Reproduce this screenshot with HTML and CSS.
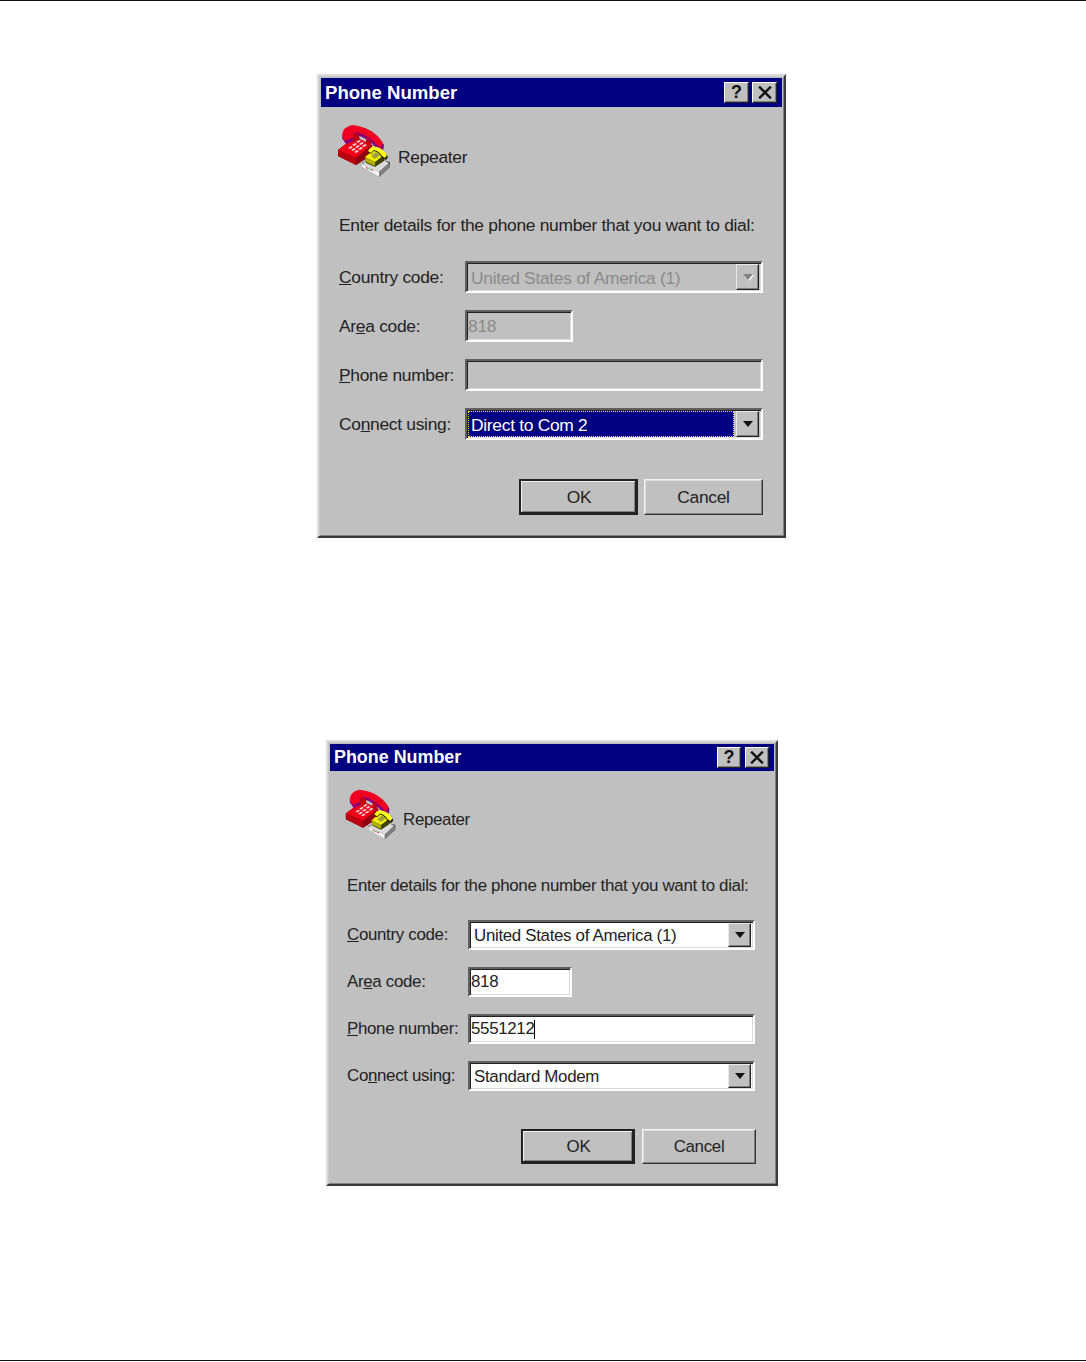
FILE: index.html
```html
<!DOCTYPE html>
<html lang="en">
<head>
  <meta charset="UTF-8" />
  <meta name="viewport" content="width=device-width, initial-scale=1.0"/>
  <title>Phone Number</title>
  <link rel="stylesheet" href="styles.css">
</head>
<body>
  <svg class="defs" width="0" height="0" aria-hidden="true">
    <symbol id="phones" viewBox="0 0 60 60">
      <!-- red phone -->
      <path d="M3 30 L20 17 L37 25 L38 34 L21 45 L3 36 Z" fill="#800000"/>
      <path d="M3 30 L20 17 L37 25 L21 38 Z" fill="#f00018"/>
      <path d="M3 30 L21 38 L21 45 L3 36 Z" fill="#b80010"/>
      <path d="M21 38 L37 25 L38 34 L21 45 Z" fill="#900010"/>
      <path d="M7 18 Q8 9 17 7 Q38 9 49 25 L48 32 L43 30 Q32 17 21 15 L21 20 L11 24 Z" fill="#800080"/>
      <path d="M7 15 Q8 7 17 5 Q38 7 48 23 L45 28 Q33 14 21 12 L20 17 L10 21 Z" fill="#f00020"/>
      <path d="M18 13 L24 14 L25 23 L18 20 Z M31 17 L36 21 L36 28 L31 25 Z" fill="#c00010"/>
      <g fill="#ffd0d0">
        <path d="M13 28 l3 -2 l2 1 l-3 2 Z M17 25 l3 -2 l2 1 l-3 2 Z M21 22 l3 -2 l2 1 l-3 2 Z"/>
        <path d="M16 30 l3 -2 l2 1 l-3 2 Z M20 27 l3 -2 l2 1 l-3 2 Z M24 24 l3 -2 l2 1 l-3 2 Z"/>
        <path d="M19 32 l3 -2 l2 1 l-3 2 Z M23 29 l3 -2 l2 1 l-3 2 Z M27 26 l3 -2 l2 1 l-3 2 Z"/>
      </g>
      <!-- small phone on its grey base -->
      <path d="M27 47 L44 57 L55 47 L55 42 L40 38 L27 43 Z" fill="#404040"/>
      <path d="M27 44 L44 52 L54 43 L40 36 Z" fill="#dcdcdc"/>
      <path d="M27 44 L44 52 L44 57 L27 47 Z" fill="#f4f4f4"/>
      <path d="M44 52 L54 43 L55 47 L44 57 Z" fill="#808080"/>
      <path d="M31 47 l2 1 v1 l-2 -1 Z M36 49 l2 1 v1 l-2 -1 Z" fill="#d02020"/>
      <path d="M33.5 48 l2 1 v1 l-2 -1 Z" fill="#20a040"/>
      <path d="M30 38 L40 30 L50 36 L49 41 L40 47 L31 43 Z" fill="#404000"/>
      <path d="M30 37 L40 29 L49 35 L40 42 Z" fill="#f0f000"/>
      <path d="M30 37 L40 42 L40 46 L31 42 Z" fill="#b0b000"/>
      <path d="M33 32 Q36 26 42 28 Q50 30 53 37 L51 40 L47 38 Q44 32 39 31 L36 34 Z" fill="#202000"/>
      <path d="M33 31 Q36 25 42 27 Q49 29 52 35 L50 38 L47 36 Q44 31 39 30 L36 33 Z" fill="#ffff20"/>
      <path d="M36 36 L41 32 L45 35 L40 39 Z" fill="#a0a040"/>
    </symbol>
  </svg>

  <div class="page">
    <section class="dialog dialog-disabled">
      <header class="titlebar">
        <span class="title">Phone Number</span>
        <span class="title-btn">?</span>
        <span class="title-btn">
          <svg viewBox="0 0 12 10"><path d="M1.5 .5 L10.5 9.5 M10.5 .5 L1.5 9.5" stroke="#111" stroke-width="1.8" fill="none"/></svg>
        </span>
      </header>
      <div class="dialog-body">
        <div class="device">
          <svg class="device-icon"><use href="#phones"/></svg>
          <span class="device-name">Repeater</span>
        </div>
        <p class="prompt">Enter details for the phone number that you want to dial:</p>
        <div class="form">
          <label><u>C</u>ountry code:</label>
          <div class="field off"><span class="value">United States of America (1)</span><span class="drop off"><i></i></span></div>
          <label>Ar<u>e</u>a code:</label>
          <div class="field off short"><span class="value tight">818</span></div>
          <label><u>P</u>hone number:</label>
          <div class="field off"></div>
          <label>Co<u>n</u>nect using:</label>
          <div class="field off"><span class="value selected">Direct to Com 2</span><span class="drop"><i></i></span></div>
        </div>
        <div class="actions">
          <button class="btn btn-default">OK</button>
          <button class="btn">Cancel</button>
        </div>
      </div>
    </section>

    <section class="dialog dialog-enabled">
      <header class="titlebar">
        <span class="title">Phone Number</span>
        <span class="title-btn">?</span>
        <span class="title-btn">
          <svg viewBox="0 0 12 10"><path d="M1.5 .5 L10.5 9.5 M10.5 .5 L1.5 9.5" stroke="#111" stroke-width="1.8" fill="none"/></svg>
        </span>
      </header>
      <div class="dialog-body">
        <div class="device">
          <svg class="device-icon"><use href="#phones"/></svg>
          <span class="device-name">Repeater</span>
        </div>
        <p class="prompt">Enter details for the phone number that you want to dial:</p>
        <div class="form">
          <label><u>C</u>ountry code:</label>
          <div class="field"><span class="value">United States of America (1)</span><span class="drop"><i></i></span></div>
          <label>Ar<u>e</u>a code:</label>
          <div class="field short"><span class="value tight">818</span></div>
          <label><u>P</u>hone number:</label>
          <div class="field"><span class="value tight caret">5551212</span></div>
          <label>Co<u>n</u>nect using:</label>
          <div class="field"><span class="value">Standard Modem</span><span class="drop"><i></i></span></div>
        </div>
        <div class="actions">
          <button class="btn btn-default">OK</button>
          <button class="btn">Cancel</button>
        </div>
      </div>
    </section>

    <div class="foot-rule"></div>
  </div>
</body>
</html>
```

FILE: styles.css
```css
* { box-sizing: border-box; }
html, body {
  margin: 0;
  padding: 0;
  background: #fff;
}
.defs {
  display: block;
  height: 0;
}
.page {
  height: 1362px;
  display: flex;
  flex-direction: column;
  border-top: 1px solid #111;
  font-family: "Liberation Sans", Arial, sans-serif;
  color: #222;
}
.foot-rule {
  margin-top: auto;
  margin-bottom: 1px;
  border-top: 1px solid #111;
}

/* sizes differ a bit because the two shots were scaled differently */
.dialog-disabled {
  --text: 17.4px;
  --track: -0.29px;
  --title: 18.6px;
  --title-h: 29px;
  --tbtn-w: 25px;
  --tbtn-gap: 3px;
  --pad: 18px;
  --device-top: 13px;
  --icon: 60px;
  --name-drop: 14px;
  --prompt-top: 35px;
  --form-top: 26px;
  --col: 126px;
  --field-w: 298px;
  --short-w: 108px;
  --field-h: 32px;
  --gap: 17px;
  --actions-top: 39px;
  --actions-w: 424px;
  --btn-w: 119px;
  --btn-h: 36px;
  --btn-gap: 6px;
  width: 469px;
  height: 464px;
  margin: 73px 0 0 317px;
}
.dialog-enabled {
  --text: 16.9px;
  --track: -0.32px;
  --title: 17.9px;
  --title-h: 27px;
  --tbtn-w: 24px;
  --tbtn-gap: 4px;
  --pad: 17px;
  --device-top: 14px;
  --icon: 57px;
  --name-drop: 13px;
  --prompt-top: 34px;
  --form-top: 24px;
  --col: 121px;
  --field-w: 287px;
  --short-w: 104px;
  --field-h: 30px;
  --gap: 17px;
  --actions-top: 38px;
  --actions-w: 409px;
  --btn-w: 114px;
  --btn-h: 35px;
  --btn-gap: 7px;
  width: 452px;
  height: 446px;
  margin: 202px 0 0 326px;
}

.dialog {
  flex: none;
  background: #c0c0c0;
  border: 2px solid;
  border-color: #dcdcdc #3a3a3a #3a3a3a #dcdcdc;
  box-shadow: inset 1px 1px 0 #c8c8c8, inset -1px -1px 0 #808080;
  padding: 2px;
  font-size: var(--text);
  letter-spacing: var(--track);
}
.titlebar {
  display: flex;
  align-items: center;
  gap: var(--tbtn-gap);
  height: var(--title-h);
  background: #000080;
  padding: 0 5px 0 4px;
  letter-spacing: 0;
}
.title {
  flex: 1;
  color: #fff;
  font-weight: bold;
  font-size: var(--title);
}
.title-btn {
  width: var(--tbtn-w);
  height: 21px;
  display: flex;
  align-items: center;
  justify-content: center;
  background: #c0c0c0;
  color: #111;
  font-weight: bold;
  font-size: 18px;
  border: 1px solid;
  border-color: #fff #222 #222 #fff;
  box-shadow: inset -1px -1px 0 #808080;
}
.title-btn svg {
  width: 16px;
  height: 13px;
}

.dialog-body {
  padding: var(--device-top) 0 0 var(--pad);
}
.device {
  display: flex;
  align-items: center;
  gap: 3px;
  margin-left: -4px;
  height: var(--icon);
}
.device-icon {
  width: var(--icon);
  height: var(--icon);
}
.device-name {
  padding-top: var(--name-drop);
}
.prompt {
  margin: var(--prompt-top) 0 0;
  line-height: 20px;
  white-space: nowrap;
}

.form {
  display: grid;
  grid-template-columns: var(--col) var(--field-w);
  row-gap: var(--gap);
  align-items: center;
  margin-top: var(--form-top);
}
.form label {
  white-space: nowrap;
}
.field {
  height: var(--field-h);
  width: 100%;
  display: flex;
  align-items: stretch;
  background: #fff;
  border: 2px solid;
  border-color: #606060 #fff #fff #606060;
  box-shadow: inset 1px 1px 0 #222, inset -1px -1px 0 #dcdcdc;
  padding: 1px 2px 1px 1px;
}
.field.off {
  background: #c0c0c0;
  color: #8a8a8a;
}
.field.short {
  width: var(--short-w);
}
.value {
  flex: 1;
  display: flex;
  align-items: center;
  padding: 2px 0 0 3px;
  white-space: nowrap;
}
.value.tight {
  padding: 0;
}
.value.selected {
  background: #000080;
  color: #fff;
  outline: 1px dotted #ff0;
  outline-offset: -1px;
  margin-right: 2px;
}
.value.caret::after {
  content: "";
  width: 1px;
  height: 19px;
  margin-left: -1px;
  background: #000;
}
.drop {
  flex: none;
  width: 23px;
  display: flex;
  align-items: center;
  justify-content: center;
  background: #c0c0c0;
  border: 1px solid;
  border-color: #e8e8e8 #222 #222 #e8e8e8;
  box-shadow: inset -1px -1px 0 #808080;
}
.drop i {
  width: 0;
  height: 0;
  border: 5.5px solid transparent;
  border-top: 6px solid #111;
  border-bottom: 0;
}
.drop.off i {
  border-top-color: #808080;
  filter: drop-shadow(1px 1px 0 #fff);
}

.actions {
  display: flex;
  justify-content: flex-end;
  gap: var(--btn-gap);
  margin-top: var(--actions-top);
  width: var(--actions-w);
}
.btn {
  width: var(--btn-w);
  height: var(--btn-h);
  padding: 0;
  background: #c0c0c0;
  color: #222;
  font-family: inherit;
  font-size: var(--text);
  letter-spacing: inherit;
  border: 1px solid;
  border-color: #f4f4f4 #333 #333 #f4f4f4;
  box-shadow: inset -1px -1px 0 #808080, inset 1px 1px 0 #dcdcdc;
}
.btn-default {
  border: 2px solid #222;
  border-right-width: 3px;
  border-bottom-width: 3px;
  padding: 2px 0 0 2px;
  box-shadow: inset 1px 1px 0 #f4f4f4, inset -1px -1px 0 #808080;
}
```
